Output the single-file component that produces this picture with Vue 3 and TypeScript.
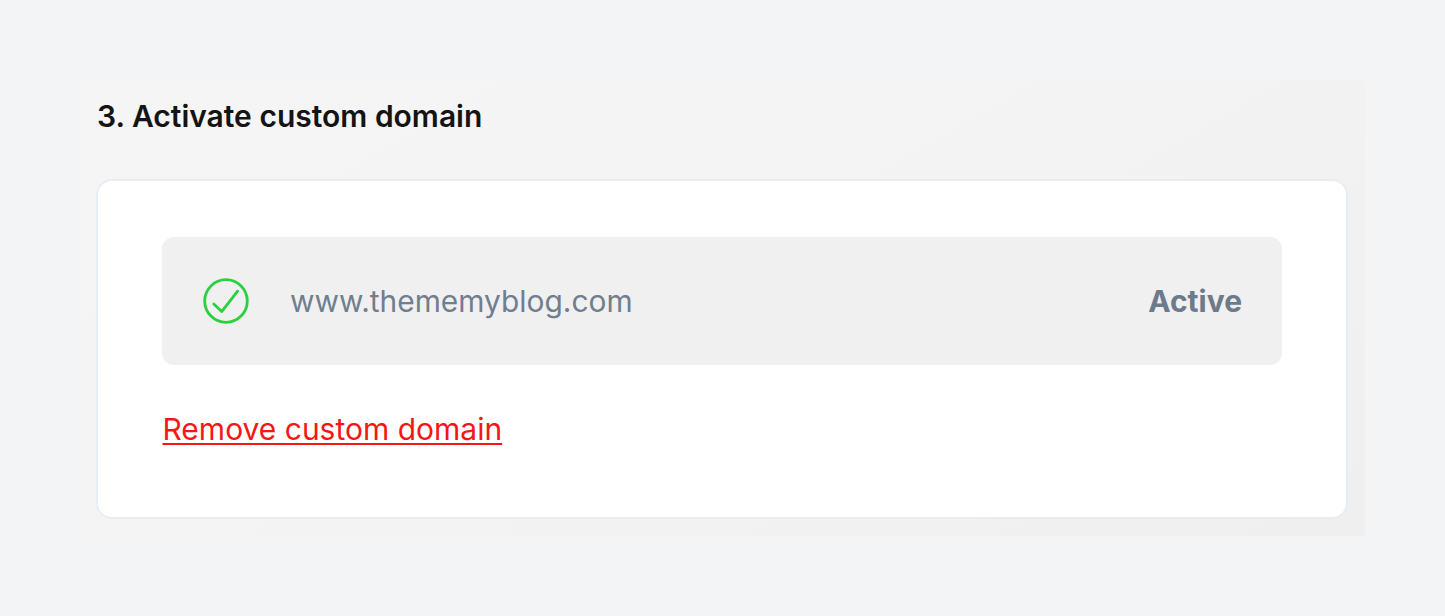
<script setup lang="ts">
const domain: string = 'www.thememyblog.com'
</script>

<template>
  <div class="page">
    <section class="panel">
      <h2 class="title">3. Activate custom domain</h2>
      <div class="card">
        <div class="row">
          <svg class="icon" viewBox="0 0 46 46" width="46" height="46" fill="none" stroke="#2ad03f" stroke-linecap="round" stroke-linejoin="round">
            <circle cx="23" cy="23" r="21.3" stroke-width="2.8" />
            <path d="M10.8 26 L18.7 33.6 L34.6 13.2" stroke-width="2.8" />
          </svg>
          <span class="domain">{{ domain }}</span>
          <span class="status">Active</span>
        </div>
        <a class="remove" href="#">Remove custom domain</a>
      </div>
    </section>
  </div>
</template>

<style>
html, body { margin: 0; background: #f3f4f6; }
</style>

<style scoped>
.page {
  box-sizing: border-box;
  width: 1445px;
  height: 616px;
  padding: 80px;
  background: #f3f4f6;
  font-family: Inter, "Liberation Sans", sans-serif;
}
.panel {
  box-sizing: border-box;
  height: 456px;
  padding: 16px;
  background: linear-gradient(150deg, #f5f5f5 0%, #f4f4f4 40%, #efefef 100%);
}
.title {
  margin: 0 0 42px 1px;
  font-size: 30px;
  line-height: 41px;
  font-weight: 600;
  color: #141414;
}
.card {
  box-sizing: border-box;
  width: 1252px;
  height: 340px;
  padding: 56px 64px 55px;
  background: #fff;
  border: 2px solid #e6eef5;
  border-radius: 16px;
}
.row {
  display: flex;
  align-items: center;
  height: 128px;
  padding: 0 40px 0 41px;
  background: #f0f0f0;
  border-radius: 12px;
}
.icon { flex: none; margin-right: 41px; }
.domain {
  flex: 1;
  font-size: 29.9px;
  color: #707e8e;
}
.status {
  font-size: 30px;
  font-weight: 700;
  color: #6c7a8c;
}
.remove {
  display: inline-block;
  margin-top: 43px;
  margin-left: 0.5px;
  font-size: 30px;
  line-height: 42px;
  color: #f61616;
  text-decoration: underline;
  text-underline-offset: 3px;
  text-decoration-thickness: 2px;
}
</style>
